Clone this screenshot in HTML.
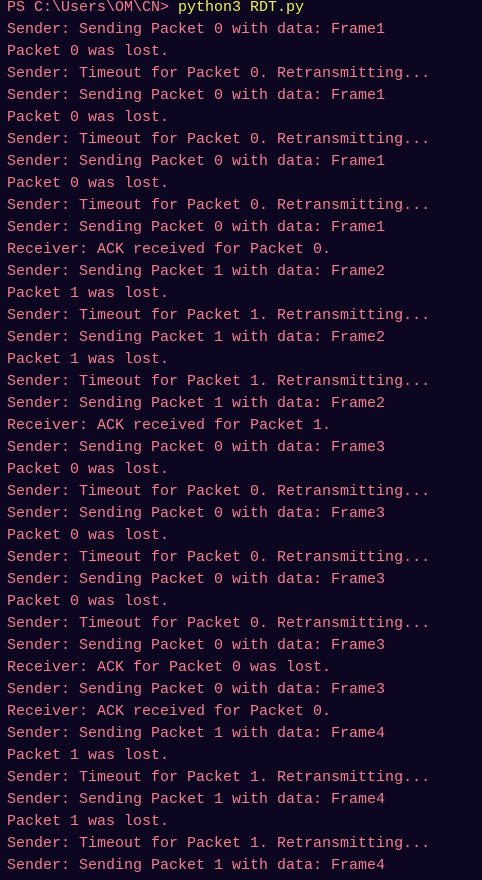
<!DOCTYPE html>
<html><head><meta charset="utf-8"><style>
html,body{margin:0;padding:0;background:#0c0620;width:482px;height:880px;overflow:hidden}
pre{margin:0;padding:0 0 0 7px;position:relative;top:-3px;font-family:"Liberation Mono",monospace;font-size:15px;line-height:22px;color:#f47d8e;white-space:pre}
.y{color:#eeee5c}
</style></head><body><pre>PS C:\Users\OM\CN&gt; <span class="y">python3 RDT.py</span>
Sender: Sending Packet 0 with data: Frame1
Packet 0 was lost.
Sender: Timeout for Packet 0. Retransmitting...
Sender: Sending Packet 0 with data: Frame1
Packet 0 was lost.
Sender: Timeout for Packet 0. Retransmitting...
Sender: Sending Packet 0 with data: Frame1
Packet 0 was lost.
Sender: Timeout for Packet 0. Retransmitting...
Sender: Sending Packet 0 with data: Frame1
Receiver: ACK received for Packet 0.
Sender: Sending Packet 1 with data: Frame2
Packet 1 was lost.
Sender: Timeout for Packet 1. Retransmitting...
Sender: Sending Packet 1 with data: Frame2
Packet 1 was lost.
Sender: Timeout for Packet 1. Retransmitting...
Sender: Sending Packet 1 with data: Frame2
Receiver: ACK received for Packet 1.
Sender: Sending Packet 0 with data: Frame3
Packet 0 was lost.
Sender: Timeout for Packet 0. Retransmitting...
Sender: Sending Packet 0 with data: Frame3
Packet 0 was lost.
Sender: Timeout for Packet 0. Retransmitting...
Sender: Sending Packet 0 with data: Frame3
Packet 0 was lost.
Sender: Timeout for Packet 0. Retransmitting...
Sender: Sending Packet 0 with data: Frame3
Receiver: ACK for Packet 0 was lost.
Sender: Sending Packet 0 with data: Frame3
Receiver: ACK received for Packet 0.
Sender: Sending Packet 1 with data: Frame4
Packet 1 was lost.
Sender: Timeout for Packet 1. Retransmitting...
Sender: Sending Packet 1 with data: Frame4
Packet 1 was lost.
Sender: Timeout for Packet 1. Retransmitting...
Sender: Sending Packet 1 with data: Frame4
Packet 1 was lost.</pre></body></html>
